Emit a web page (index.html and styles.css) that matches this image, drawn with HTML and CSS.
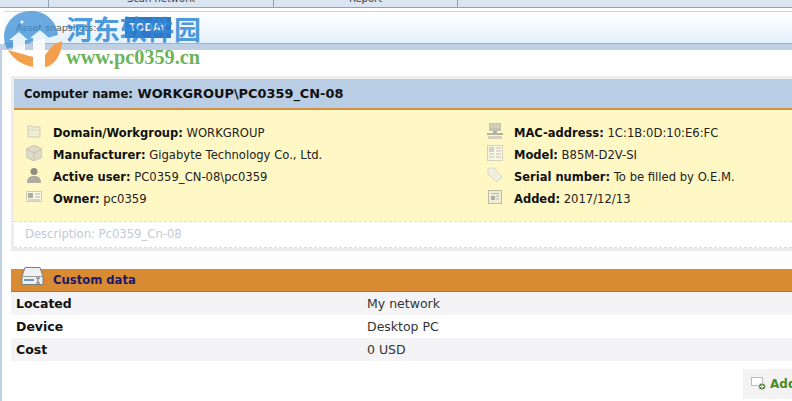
FILE: index.html
```html
<!DOCTYPE html>
<html lang="en">
<head>
    <meta charset="UTF-8">
    <meta name="viewport" content="width=device-width, initial-scale=1.0">
    <title>Asset details</title>
    <link rel="stylesheet" href="styles.css">
</head>
<body>
    <div class="tabs">
        <div class="tab tab-scan"><span>Scan network</span></div>
        <div class="tab tab-report"><span>Report</span></div>
    </div>

    <div class="toolbar">
        <span class="snap-label">Asset snapshots:</span>
        <span class="today">TODAY</span>
    </div>

    <div class="page">
        <section class="card">
            <h2 class="card-title"><span class="title-key">Computer name:</span> WORKGROUP\PC0359_CN-08</h2>
            <div class="info">
                <ul class="info-col info-col-left">
                    <li><svg class="ico" viewBox="0 0 16 16"><path d="M2 3h4l1 1h7v10H2z" fill="#efecd4" stroke="#cdcbb6"/><path d="M2 7h12" stroke="#dad8c2"/></svg><span><b>Domain/Workgroup:</b> WORKGROUP</span></li>
                    <li><svg class="ico" viewBox="0 0 16 16"><path d="M8 0l8 4v8l-8 4-8-4V4z" fill="#dddbc6" stroke="#c6c4b0"/><path d="M0 4l8 4 8-4M8 8v8" fill="none" stroke="#c6c4b0"/></svg><span><b>Manufacturer:</b> Gigabyte Technology Co., Ltd.</span></li>
                    <li><svg class="ico" viewBox="0 0 16 16"><circle cx="8" cy="4.500" r="3.500" fill="#8f8e80"/><path d="M1 16c0-6 3-7 7-7s7 1 7 7z" fill="#aeac9c"/></svg><span><b>Active user:</b> PC0359_CN-08\pc0359</span></li>
                    <li><svg class="ico" viewBox="0 0 16 16"><rect x="0.500" y="2.500" width="15" height="10" fill="#f8f6e4" stroke="#d0cebc"/><rect x="2" y="4" width="5" height="5" fill="#b0aea0"/><path d="M9 5h5M9 8h5M2 11h12" stroke="#b9b7a8"/></svg><span><b>Owner:</b> pc0359</span></li>
                </ul>
                <ul class="info-col">
                    <li><svg class="ico" viewBox="0 0 16 16"><rect x="2" y="0" width="12" height="8" fill="#c4c2ae"/><path d="M3 2h10M3 4h10" stroke="#dddbc6"/><rect x="6" y="8" width="4" height="2" fill="#aeac9c"/><rect x="0" y="10" width="16" height="2" fill="#b4b2a0"/><rect x="1" y="13" width="14" height="3" fill="#d4d2be"/></svg><span><b>MAC-address:</b> 1C:1B:0D:10:E6:FC</span></li>
                    <li><svg class="ico" viewBox="0 0 16 16"><rect x="0.500" y="0.500" width="15" height="15" fill="#f8f6e4" stroke="#d4d2be"/><rect x="2" y="2" width="5" height="5" fill="#d4d2be"/><path d="M9 3h5M9 6h5M9 9h5M9 12h5M2 9h5M2 12h5" stroke="#c4c2ae"/></svg><span><b>Model:</b> B85M-D2V-SI</span></li>
                    <li><svg class="ico" viewBox="0 0 16 16"><path d="M1 1h6l8 9-5 5-9-8z" fill="#f0eedc" stroke="#dad8c6"/><circle cx="4" cy="4" r="1" fill="#fff7c4"/></svg><span><b>Serial number:</b> To be filled by O.E.M.</span></li>
                    <li><svg class="ico" viewBox="0 0 16 16"><rect x="1.500" y="1.500" width="13" height="13" fill="#efecd8" stroke="#bdbba8"/><rect x="4" y="7" width="4" height="4" fill="#aeac9c"/><path d="M9 7h3M9 10h3M4 4.500h8" stroke="#bdbba8"/></svg><span><b>Added:</b> 2017/12/13</span></li>
                </ul>
            </div>
            <div class="desc">Description: Pc0359_Cn-08</div>
        </section>

        <section class="custom">
            <h3 class="custom-title">
                <svg class="custom-ico" viewBox="0 0 23 18"><path d="M4 0.500h15l3 9v8H1v-8z" fill="#eef1f3" stroke="#7d7d7d"/><path d="M1 9.500h21" stroke="#9a9a9a"/><rect x="3" y="12" width="10" height="2" fill="#6f97bd"/><path d="M15 11h4M17 11v5M15 16h4" fill="none" stroke="#6a6a6a"/></svg>
                Custom data
            </h3>
            <div class="row row-alt"><b>Located</b><span>My network</span></div>
            <div class="row"><b>Device</b><span>Desktop PC</span></div>
            <div class="row row-alt"><b>Cost</b><span>0 USD</span></div>
        </section>

        <div class="actions">
            <button class="add-btn">
                <svg class="add-ico" viewBox="0 0 16 14"><rect x="0.500" y="0.500" width="11" height="8" fill="#fff" stroke="#bbb"/><circle cx="11" cy="9.500" r="3.500" fill="#4d7f3a" stroke="#dfe8d8"/><path d="M9 9.500h4M11 7.500v4" stroke="#fff"/></svg>Add
            </button>
        </div>
    </div>

    <!-- watermark over the top left corner -->
    <div class="mark">
        <svg class="mark-logo" viewBox="0 0 70 62">
            <path d="M32 3a26 26 0 0 1 26 24L7 41A26 26 0 0 1 32 3z" fill="#3a8dd4" opacity="0.75"/>
            <path d="M19 24l9 8h-3v10l-12 4V32H9z" fill="#fff" opacity="0.85"/>
            <path d="M40 22l9 8h-4v20H33V30h-3z" fill="#fff" opacity="0.85"/>
            <circle cx="22" cy="14" r="1.500" fill="#fff"/>
            <path d="M62 33c0 14-8 25-17 26V47l8-10zM33 59C22 57 13 51 8 42l25 7z" fill="#f3a04d"/>
        </svg>
        <span class="mark-cn">河东软件园</span>
        <span class="mark-url">www.pc0359.cn</span>
    </div>
</body>
</html>
```

FILE: styles.css
```css
body {
    margin: 0;
    height: 401px;
    overflow: hidden;
    position: relative;
    display: flex;
    flex-direction: column;
    background-color: white;
    font-family: "DejaVu Sans", Verdana, sans-serif;
    font-size: 11.600px;
    color: #222;
}
.tabs {
    display: flex;
    flex: none;
    height: 7px;
    overflow: hidden;
    background-color: #dbe5f1;
    border-bottom: 1px solid #8fa3b8;
    padding-left: 48px;
}
.tab {
    border-left: 1px solid #8fa3b8;
    text-align: center;
    color: #444;
    font-size: 10px;
    line-height: 1;
}
.tab span {
    display: block;
    margin-top: -6px;
}
.tab-scan {
    width: 224px;
}
.tab-report {
    width: 183px;
    border-right: 1px solid #8fa3b8;
}
.toolbar {
    flex: none;
    height: 31px;
    margin-top: 3px;
    margin-left: 4px;
    display: flex;
    align-items: center;
    gap: 28px;
    padding-left: 12px;
    border-top: 1px solid #c8d6e6;
    border-bottom: 1px solid #9fb3c8;
    background: linear-gradient(#ffffff, #e3f1fb);
}
.snap-label {
    width: 81px;
    color: #555;
    font-size: 9.500px;
    white-space: nowrap;
}
.today {
    width: 46px;
    height: 21px;
    line-height: 21px;
    text-align: center;
    background-color: #2f78c9;
    color: #e8eef6;
    font-size: 10px;
    font-weight: bold;
}
.page {
    flex: 1;
    border-top: 6px solid #bfd0e4;
    border-left: 2px solid #bfd0e4;
    padding: 26px 0 0 9px;
}
.card {
    border: 3px solid #ededed;
    border-right: none;
    margin-bottom: 18px;
}
.card-title {
    margin: 0;
    height: 29px;
    line-height: 29px;
    padding-left: 10px;
    font-size: 12.900px;
    color: #111;
    background-color: #b9cde5;
    border-bottom: 2px solid #d5903f;
}
.title-key {
    font-size: 11.600px;
}
.info {
    display: flex;
    background-color: #fff7c4;
    padding: 12px 0 11px 12px;
}
.info-col {
    list-style: none;
    margin: 0;
    padding: 0;
    flex: 1;
}
.info-col-left {
    flex: 0 0 461px;
}
.info-col li {
    height: 22px;
    display: flex;
    align-items: center;
    white-space: nowrap;
}
.info-col b {
    color: #111;
    font-size: 11.500px;
}
.ico {
    width: 16px;
    height: 16px;
    margin-right: 11px;
    margin-top: -5px;
}
.desc {
    height: 25px;
    line-height: 25px;
    padding-left: 11px;
    color: #c4c8d8;
    border-top: 1px dashed #dddddd;
    border-bottom: 1px dashed #dddddd;
}
.custom-title {
    position: relative;
    margin: 0;
    height: 22px;
    line-height: 22px;
    padding-left: 42px;
    font-size: 11.600px;
    color: #1a1a6a;
    background-color: #d98b33;
    border-bottom: 1px solid #9c7a50;
}
.custom-ico {
    position: absolute;
    left: 10px;
    top: -2px;
    width: 23px;
    height: 18px;
}
.row {
    height: 23px;
    display: flex;
    align-items: center;
    padding-left: 5px;
    font-size: 12.500px;
}
.row b {
    width: 351px;
    color: #111;
}
.row span {
    color: #333;
}
.row-alt {
    background-color: #f4f4f6;
}
.actions {
    display: flex;
    justify-content: flex-end;
    padding-top: 8px;
}
.add-btn {
    width: 49px;
    height: 30px;
    border: none;
    padding: 0 0 0 8px;
    background-color: #f3f3f3;
    color: #4d8a1f;
    font-family: inherit;
    font-size: 12px;
    font-weight: bold;
    text-align: left;
    white-space: nowrap;
    overflow: hidden;
}
.add-ico {
    width: 16px;
    height: 14px;
    vertical-align: -3px;
    margin-right: 3px;
}
.mark {
    position: absolute;
    left: 0;
    top: 0;
}
.mark-logo {
    position: absolute;
    left: 0;
    top: 8px;
    width: 70px;
    height: 62px;
}
.mark-cn {
    position: absolute;
    left: 66px;
    top: 14px;
    font-family: "Noto Sans CJK SC", sans-serif;
    font-size: 27px;
    line-height: 30px;
    font-weight: bold;
    white-space: nowrap;
    color: rgba(49, 137, 214, 0.85);
}
.mark-url {
    position: absolute;
    left: 66px;
    top: 47px;
    font-family: "Liberation Serif", serif;
    font-size: 20.300px;
    line-height: 20px;
    font-weight: bold;
    white-space: nowrap;
    color: #6cb35c;
}
```
